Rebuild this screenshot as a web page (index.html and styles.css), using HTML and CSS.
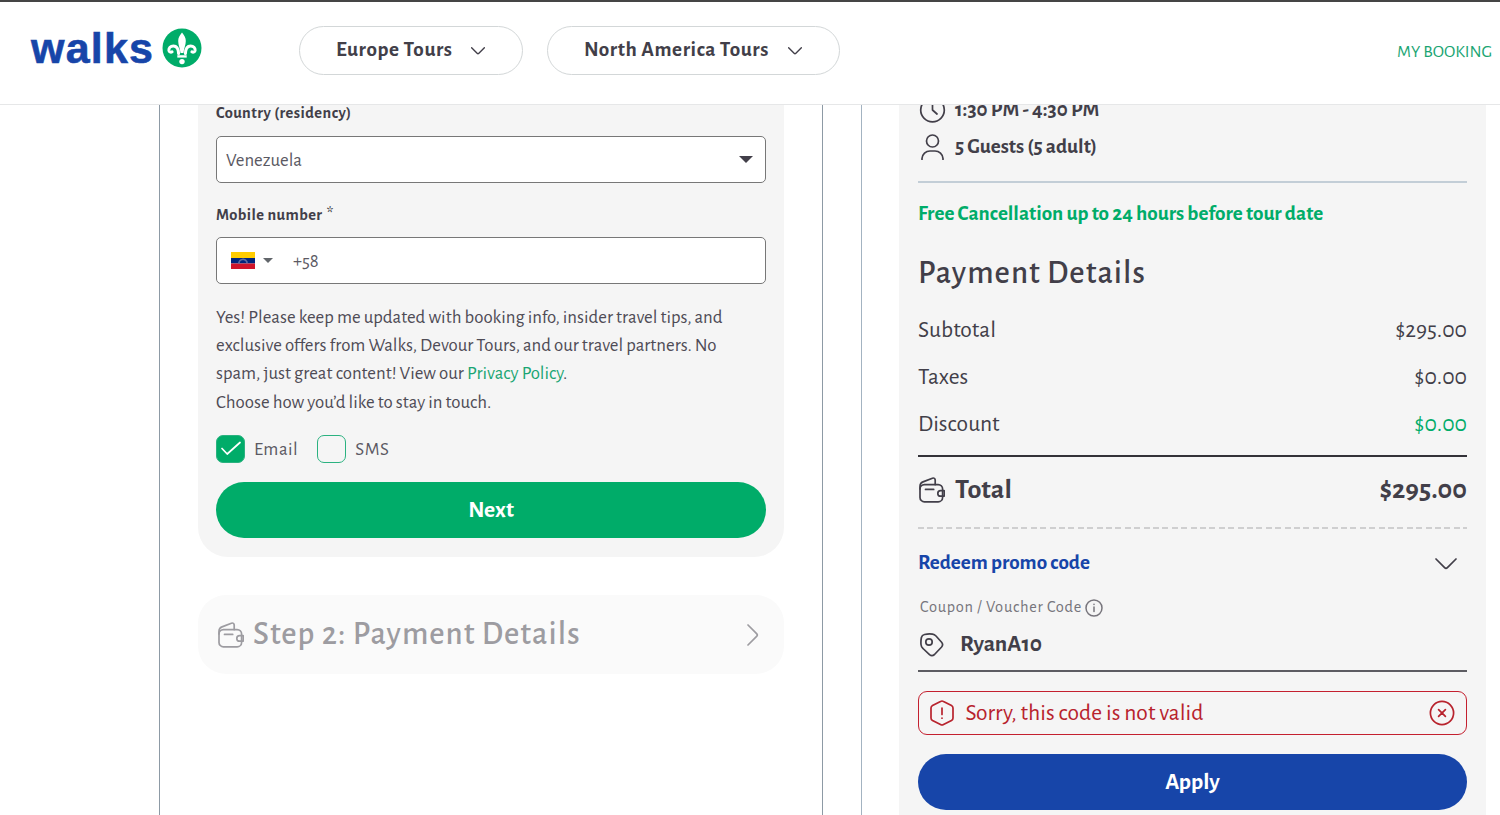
FILE: index.html
```html
<!DOCTYPE html>
<html lang="en">

<head>
  <meta charset="UTF-8">
  <meta name="viewport" content="width=device-width, initial-scale=1.0">
  <title>Walks</title>
  <link rel="stylesheet" href="styles.css">
</head>

<body>
  <!-- shared icons -->
  <svg class="sprite" aria-hidden="true">
    <symbol id="icon-wallet" viewBox="0 0 26 26">
      <rect x="1" y="7.6" width="22.6" height="17.2" rx="4.4" />
      <path d="M1 12V9.2C1 6.6 2 5.7 4 4.9L13.4 1.2C15 .6 16.2 1.5 16.2 3.1V7.6M6.5 12.4h8.2" />
      <path d="M25.2 13.6h-3.6a2.8 2.8 0 0 0 0 5.6h3.6z" />
    </symbol>
    <symbol id="icon-chevron" viewBox="0 0 22 12">
      <path d="M1 1l8.6 8.6q1.4 1.4 2.8 0L21 1" />
    </symbol>
  </svg>

  <header class="header">
    <a class="logo">
      <span class="logo-text">walks</span>
      <svg class="logo-mark" viewBox="0 0 40 40">
        <circle cx="20" cy="20" r="19.5" fill="#00ac69" />
        <path fill="#fff" d="M20 4.5C17.5 7.5 16.2 10 16.2 13c0 4 1.9 7.5 2.3 12h3c.4-4.5 2.3-8 2.3-12 0-3-1.3-5.5-3.8-8.5z" />
        <path fill="none" stroke="#fff" stroke-width="3" stroke-linecap="round" d="M16.6 25.6C16.4 20.500 14.5 17.9 11.4 17.9 8.4 17.9 6.7 19.9 6.9 22.2c.2 1.7 1.8 2.6 3.2 1.6M23.4 25.6C23.6 20.5 25.5 17.9 28.6 17.9c3 0 4.7 2 4.5 4.3-.2 1.7-1.8 2.6-3.2 1.6" />
        <path fill="#fff" d="M15.3 27.200h9.4v2.400h-9.4z" />
        <circle cx="20" cy="33.6" r="2.7" fill="#fff" />
      </svg>
    </a>
    <nav class="nav">
      <a class="pill pill-europe"><span>Europe Tours</span><svg class="chevron"><use href="#icon-chevron" /></svg></a>
      <a class="pill pill-america"><span>North America Tours</span><svg class="chevron"><use href="#icon-chevron" /></svg></a>
    </nav>
    <a class="booking">MY BOOKING</a>
  </header>

  <main class="main">
    <section class="steps">
      <form class="card">
        <label class="label">Country (residency)</label>
        <div class="field">
          <span class="field-value">Venezuela</span>
          <i class="caret"></i>
        </div>
        <label class="label label-mobile">Mobile number <span class="required">*</span></label>
        <div class="field field-phone">
          <svg class="flag" viewBox="0 0 24 17">
            <path fill="#fc0" d="M0 0h24v6H0z" />
            <path fill="#00247d" d="M0 6h24v5.5H0z" />
            <path fill="#cf142b" d="M0 11.5h24V17H0z" />
            <path fill="none" stroke="#5d6ea5" stroke-dasharray="1 1" d="M8 11a4 3.6 0 0 1 8 0" />
          </svg>
          <i class="caret caret-small"></i>
          <span class="phone">+58</span>
        </div>
        <p class="news">
          Yes! Please keep me updated with booking info, insider travel tips, and<br>
          exclusive offers from Walks, Devour Tours, and our travel partners. No<br>
          spam, just great content! View our <a>Privacy Policy</a>.<br>
          Choose how you’d like to stay in touch.
        </p>
        <div class="checks">
          <span class="box checked"><svg viewBox="0 0 20 15"><path d="M1 7.5L6.2 13 19 1.5" /></svg></span>
          <span class="check-label">Email</span>
          <span class="box"></span>
          <span class="check-label">SMS</span>
        </div>
        <button type="button" class="btn btn-next">Next</button>
      </form>

      <div class="step-two">
        <svg class="wallet"><use href="#icon-wallet" /></svg>
        <h2>Step 2: Payment Details</h2>
        <svg class="arrow" viewBox="0 0 12 22"><path d="M1 1l8.6 8.6q1.4 1.4 0 2.8L1 21" /></svg>
      </div>
    </section>

    <aside class="summary">
      <div class="summary-card">
        <div class="info info-time">
          <svg viewBox="0 0 26 26"><circle cx="13" cy="13" r="11.8" /><path d="M13 6v7l4.5 4" /></svg>
          <span>1:30 PM - 4:30 PM</span>
        </div>
        <div class="info info-guests">
          <svg viewBox="0 0 26 26"><circle cx="13" cy="7" r="6" /><path d="M2.5 25.5v-1a8 8 0 0 1 8-7.5h5a8 8 0 0 1 8 7.5v1" /></svg>
          <span>5 Guests (5 adult)</span>
        </div>
        <p class="free">Free Cancellation up to 24 hours before tour date</p>
        <h2 class="title">Payment Details</h2>
        <div class="price"><span>Subtotal</span><span>$295.00</span></div>
        <div class="price"><span>Taxes</span><span>$0.00</span></div>
        <div class="price"><span>Discount</span><span class="green">$0.00</span></div>
        <div class="total">
          <svg class="wallet"><use href="#icon-wallet" /></svg>
          <span class="total-label">Total</span>
          <span>$295.00</span>
        </div>
        <div class="promo">
          <span>Redeem promo code</span>
          <svg class="chevron"><use href="#icon-chevron" /></svg>
        </div>
        <div class="coupon-label">
          <span>Coupon / Voucher Code</span>
          <svg viewBox="0 0 18 18"><circle cx="9" cy="9" r="8" /><path d="M9 8v4.5M9 5.3v.1" /></svg>
        </div>
        <div class="coupon">
          <svg viewBox="0 0 24 24"><path d="M4.5 1.500Q9 .6 12.500 1.200 14.500 1.600 16 3L21.600 9.200Q23.600 11.600 21.600 14L14.500 21.500Q12 23.600 9.500 21.600L3 15.500Q1.200 14 1 11.500.7 8 1.400 4.500 2 2 4.500 1.500z" /><circle cx="9" cy="9" r="3.200" /></svg>
          <span>RyanA10</span>
        </div>
        <div class="alert">
          <svg viewBox="0 0 26 26"><path d="M11.5 1.4q1.5-.8 3 0l8 4q1.5.9 1.5 2.6v10q0 1.700-1.500 2.600l-8 4q-1.500.8-3 0l-8-4Q2 19.700 2 18V8q0-1.700 1.500-2.600zM13 8v6.500M13 18v.2" /></svg>
          <span>Sorry, this code is not valid</span>
          <svg viewBox="0 0 26 26"><circle cx="13" cy="13" r="11.6" /><path d="M9.6 9.6l6.8 6.8M16.4 9.6l-6.8 6.8" /></svg>
        </div>
        <button type="button" class="btn btn-apply">Apply</button>
      </div>
    </aside>
  </main>
</body>

</html>
```
FILE: styles.css
```css
* {
  box-sizing: border-box;
  margin: 0;
  padding: 0;
}

body {
  height: 815px;
  overflow: hidden;
  display: flex;
  flex-direction: column;
  background-color: #fff;
  color: #423f49;
  font-family: "Alegreya Sans", Lato, "Noto Sans", sans-serif;
}

svg {
  flex: none;
  fill: none;
  stroke: currentColor;
  stroke-width: 1.7;
  stroke-linecap: round;
  stroke-linejoin: round;
}

.sprite {
  display: none;
}

span,
h2 {
  white-space: nowrap;
}

/* header */
.header {
  flex: none;
  height: 105px;
  padding: 0 8px 6px 31px;
  display: flex;
  align-items: center;
  border-top: 2px solid #454545;
  border-bottom: 1px solid #e6e7e8;
}

.logo {
  width: 268px;
  display: flex;
  align-items: center;
  gap: 8px;
  color: #1745a9;
  padding-bottom: 5px;
}

.logo-text {
  width: 123px;
  font: bold 43px/40px "Liberation Sans", sans-serif;
  letter-spacing: 1.2px;
  -webkit-text-stroke: .6px #1745a9;
}

.logo-mark {
  width: 40px;
  height: 40px;
  stroke: none;
}

.nav {
  flex: 1;
  display: flex;
  gap: 24px;
}

.pill {
  height: 49px;
  display: flex;
  align-items: center;
  justify-content: space-between;
  padding: 0 37px 1px 36px;
  border: 1px solid #d3d7d8;
  border-radius: 25px;
  font-size: 21.15px;
  font-weight: bold;
  letter-spacing: .6px;
}

.pill-europe {
  width: 224px;
}

.pill-america {
  width: 293px;
}

.pill .chevron {
  width: 14px;
  height: 8px;
  margin-top: 3px;
  stroke-width: 2.2;
}

.booking {
  padding-top: 3px;
  font-size: 17.7px;
  color: #1aa573;
}

/* page body */
.main {
  flex: 1;
  display: flex;
  overflow: hidden;
}

.steps {
  width: 664px;
  margin-left: 159px;
  padding: 0 38px;
  border-left: 1px solid #8d9aa5;
  border-right: 1px solid #8d9aa5;
}

.card {
  height: 452px;
  padding: 0 18px;
  background-color: #f5f5f5;
  border-radius: 0 0 30px 30px;
}

.label {
  display: block;
  height: 31px;
  line-height: 16px;
  font-size: 16.4px;
  font-weight: bold;
  letter-spacing: .45px;
}

.label-mobile {
  height: 54px;
  padding-top: 24px;
}

.required {
  margin-left: 1px;
  font-size: 18.8px;
  font-weight: normal;
  line-height: 0;
}

.field {
  height: 47px;
  display: flex;
  align-items: center;
  padding: 0 12px 0 9px;
  background-color: #fff;
  border: 1px solid #777;
  border-radius: 5px;
  font-size: 18.8px;
  color: #5b5963;
}

.field-value {
  flex: 1;
  padding-top: 1px;
}

.caret {
  border: 7px solid transparent;
  border-top-color: #423f49;
  border-bottom: 0;
}

.field-phone {
  padding-left: 14px;
}

.flag {
  width: 24px;
  height: 17px;
  stroke: none;
}

.caret-small {
  border-width: 5px 5px 0;
  border-top-color: #62666b;
  margin: 0 20px 0 8px;
}

.phone {
  padding-top: 2px;
}

.news {
  margin-top: 20px;
  font-size: 18.8px;
  line-height: 28.2px;
  color: #4f4c56;
  white-space: nowrap;
}

.news a {
  color: #1aa573;
}

.checks {
  display: flex;
  align-items: center;
  margin-top: 18px;
  font-size: 18.8px;
  line-height: 20px;
  letter-spacing: .5px;
  color: #5b5963;
}

.box {
  width: 29px;
  height: 28px;
  display: flex;
  align-items: center;
  justify-content: center;
  border: 1px solid #2bb280;
  border-radius: 7px;
}

.box.checked {
  background-color: #00ac69;
  color: #fff;
}

.box svg {
  width: 20px;
  height: 15px;
}

.check-label {
  margin: 0 19px 0 9px;
  padding-top: 2px;
}

.btn {
  width: 100%;
  height: 56px;
  display: block;
  border: 0;
  border-radius: 28px;
  color: #fff;
  font-family: inherit;
  font-size: 23.5px;
  font-weight: bold;
}

.btn-next {
  margin-top: 19px;
  padding-top: 2px;
  background-color: #00ac69;
}

.step-two {
  height: 79px;
  margin-top: 38px;
  padding: 0 25px 0 20px;
  display: flex;
  align-items: center;
  background-color: #fafafa;
  border-radius: 28px;
  color: #9d9ca1;
}

.step-two h2 {
  flex: 1;
  margin-left: 9px;
  padding-top: 1px;
}

.step-two h2,
.title {
  font-size: 32.9px;
  font-weight: 500;
  letter-spacing: 1px;
}

.wallet {
  width: 26px;
  height: 26px;
}

.arrow {
  width: 12px;
  height: 22px;
}

/* order summary */
.summary {
  flex: 1;
  margin-left: 38px;
  padding: 0 14px 0 37px;
  border-left: 1px solid #a3b3c1;
}

.summary-card {
  display: flow-root;
  height: 100%;
  padding: 0 19px;
  background-color: #f5f5f5;
}

.info {
  display: flex;
  align-items: center;
  gap: 9px;
  padding-left: 1px;
  font-size: 21.15px;
  font-weight: bold;
}

.info svg {
  width: 27px;
  height: 26px;
}

.info span {
  padding-bottom: 2px;
}

.info-time {
  height: 26px;
  margin-top: -8px;
}

.info-guests {
  height: 60px;
  padding-bottom: 10px;
  border-bottom: 2px solid #c3ced7;
}

.free {
  height: 62px;
  line-height: 62px;
  font-size: 21.15px;
  font-weight: bold;
  color: #00ac69;
  white-space: nowrap;
}

.title {
  height: 62px;
  line-height: 58px;
}

.price {
  height: 47px;
  display: flex;
  align-items: center;
  justify-content: space-between;
  font-size: 23.5px;
}

.green {
  color: #00ac69;
}

.total {
  height: 74px;
  margin-top: 7px;
  padding: 0 0 7px 1px;
  display: flex;
  align-items: center;
  border-top: 2px solid #333238;
  background: repeating-linear-gradient(90deg, #cfcfd0 0 6px, transparent 6px 9.4px) left bottom / 100% 2px no-repeat;
  font-size: 28.2px;
  font-weight: bold;
}

.total-label {
  flex: 1;
  margin-left: 10px;
}

.promo {
  height: 66px;
  display: flex;
  align-items: center;
  justify-content: space-between;
  padding-right: 10px;
  font-size: 21.15px;
  font-weight: bold;
  color: #1745a9;
}

.promo .chevron {
  width: 22px;
  height: 12px;
  margin-top: 3px;
  color: #423f49;
}

.coupon-label {
  height: 24px;
  display: flex;
  align-items: center;
  gap: 3px;
  padding-left: 2px;
  font-size: 16.4px;
  letter-spacing: .72px;
  color: #77757c;
}

.coupon-label svg {
  width: 18px;
  height: 18px;
  margin-top: 1px;
  stroke-width: 1.5;
}

.coupon {
  height: 53px;
  display: flex;
  align-items: center;
  gap: 16px;
  padding-left: 2px;
  border-bottom: 2px solid #5d5c62;
  font-size: 23.5px;
  font-weight: bold;
}

.coupon svg {
  width: 24px;
  height: 24px;
}

.alert {
  height: 44px;
  margin-top: 19px;
  padding: 0 11px 0 10px;
  display: flex;
  align-items: center;
  border: 1px solid #c4202f;
  border-radius: 9px;
  color: #b8232d;
  font-size: 23.5px;
}

.alert span {
  flex: 1;
  margin-left: 10.5px;
}

.alert svg {
  width: 26px;
  height: 26px;
}

.btn-apply {
  margin-top: 19px;
  background-color: #1745a9;
}
```
